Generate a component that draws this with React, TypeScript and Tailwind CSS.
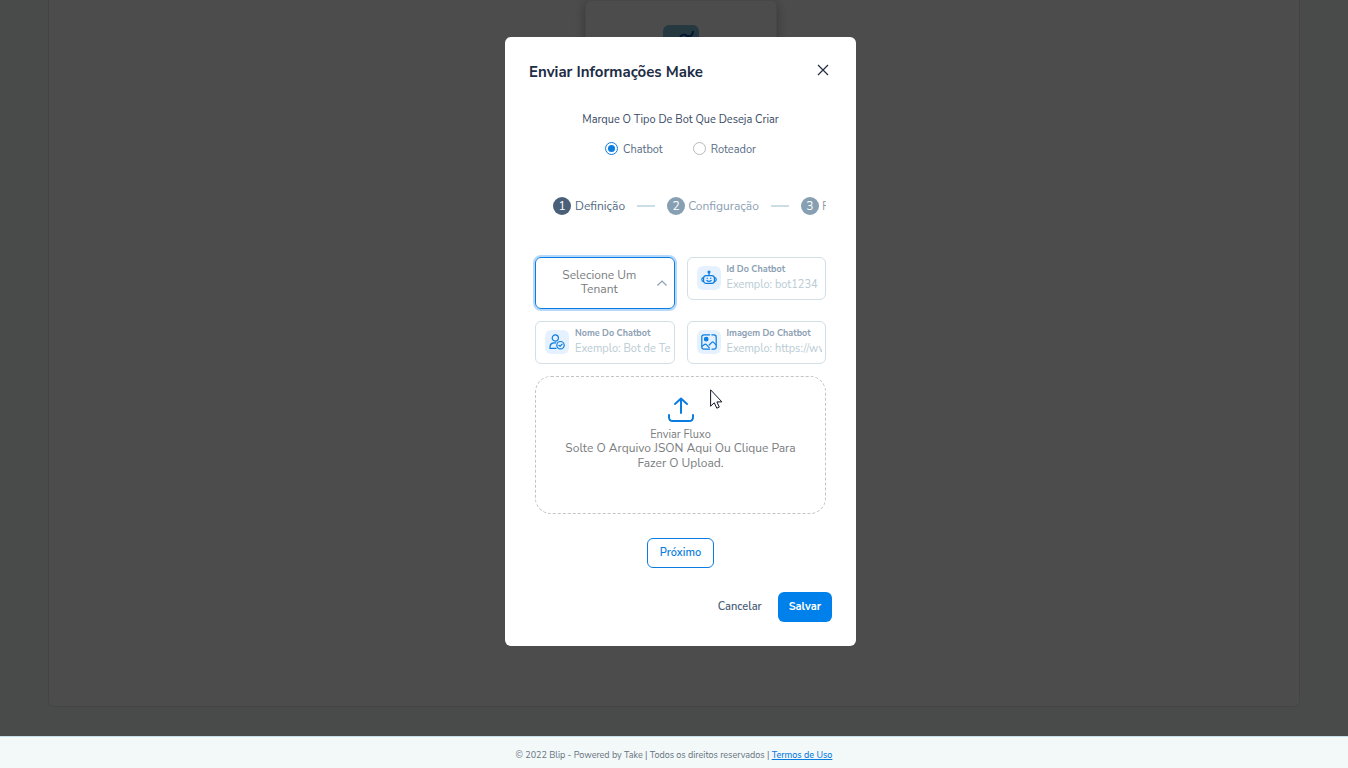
import React, { useState } from "react";

interface FieldProps {
  id: string;
  label: string;
  placeholder: string;
  icon: React.ReactNode;
}

const RobotIcon = () => (
  <svg width="16" height="16" viewBox="0 0 16 16" fill="none" stroke="#0b7de0" strokeWidth="1.2" strokeLinecap="round">
    <circle cx="8" cy="2" r="1.5" fill="#0b7de0" stroke="none" />
    <path d="M8 3v2.4" />
    <rect x="2.6" y="5.6" width="10.8" height="7.8" rx="2.6" />
    <path d="M2.3 7.6C.3 7.8.3 11.4 2.3 11.6M13.7 7.6c2 .2 2 3.8 0 4" />
    <path d="M6.2 8v.6M9.8 8v.6M5.8 10.6c1.2.9 3.2.9 4.4 0" />
  </svg>
);

const UserCheckIcon = () => (
  <svg width="16" height="16" viewBox="0 0 16 16" fill="none" stroke="#0b7de0" strokeWidth="1.2" strokeLinecap="round" strokeLinejoin="round">
    <circle cx="6.3" cy="4" r="3.1" />
    <path d="M7 14.4H1V13c0-2.4 1.8-4.2 4.2-4.2h1.6" />
    <circle cx="11.5" cy="11.2" r="3.7" />
    <path d="M9.9 11.3l1.2 1.1 2-2.2" />
  </svg>
);

const ImageIcon = () => (
  <svg width="16" height="16" viewBox="0 0 16 16" fill="none" stroke="#0b7de0" strokeWidth="1.2" strokeLinecap="round" strokeLinejoin="round">
    <path d="M8.6.8H3A2.2 2.2 0 0 0 .8 3v10A2.2 2.2 0 0 0 3 15.2h5.6M10.8.8H13A2.2 2.2 0 0 1 15.2 3v10a2.2 2.2 0 0 1-2.2 2.2h-2" />
    <circle cx="5.2" cy="5.2" r="1.8" fill="#0b7de0" />
    <path d="M1 12.4l2.4-1.9c.7-.5 1.4-.4 2 .2l2.8 3M8.2 11l2.6-2.7c.6-.6 1.2-.6 1.8 0L15 10.8" />
  </svg>
);

const UploadIcon = () => (
  <svg width="26" height="26" viewBox="0 0 26 26" fill="none" stroke="#0b7de0" strokeWidth="2" strokeLinecap="round" strokeLinejoin="round">
    <path d="M13 16V1.5M7 7l6-5.5L19 7" />
    <path d="M1 18v2.2c0 2.4 1.4 3.8 3.8 3.8h16.4c2.4 0 3.8-1.4 3.8-3.8V18" />
  </svg>
);

const Field: React.FC<FieldProps> = ({ id, label, placeholder, icon }) => (
  <div className="flex h-[43px] min-w-0 items-center gap-1.5 self-start rounded-md border border-[#d2dfe6] pb-0.5 pl-[9px] pr-[3px]">
    <span className="flex size-6 shrink-0 items-center justify-center rounded-md bg-[#e5f1fe]">
      {icon}
    </span>
    <div className="min-w-0 flex-1">
      <label htmlFor={id} className="mb-px block whitespace-nowrap text-[9px] font-bold leading-[14px] text-[#8ca0b3]">
        {label}
      </label>
      <input
        id={id}
        type="text"
        placeholder={placeholder}
        className="block h-4 w-full text-[11px] leading-4 text-[#3a4a65] outline-none placeholder:text-[#b9cbd3]"
      />
    </div>
  </div>
);

const steps = ["Definição", "Configuração", "Fim"];

const App: React.FC = () => {
  const [botType, setBotType] = useState<string>("Chatbot");
  const [tenant, setTenant] = useState<string>("");

  return (
    <div className="relative flex min-h-screen flex-col bg-[#f5fafa] font-['Nunito_Sans','Nunito','Open_Sans',sans-serif]">
      {/* Page behind the modal */}
      <main className="flex flex-1 flex-col">
        <section className="mx-12 mb-[29px] flex flex-1 justify-center rounded-b-md border border-t-0 border-[#e0e6e7] bg-white pl-3.5">
          <div className="flex h-40 w-48 justify-center self-start rounded-md border border-[#efefef] pt-6 shadow-[0_2px_12px_rgba(0,0,0,0.3)] bg-white">
            <span className="size-9 rounded-md bg-[#80bcd6]">
              <svg width="36" height="36" viewBox="0 0 36 36" fill="none" stroke="#0a4fa0" strokeWidth="2">
                <path d="M17 12c2-3 5-3 7-1M23 11c5 1 7-1 7-5" />
              </svg>
            </span>
          </div>
        </section>
      </main>
      <footer className="relative z-20 h-8 border-t border-[#c7dfe8] bg-[#f3f8f9] pt-[11px] text-center text-[9px] leading-[14px] text-[#66747d]">
        © 2022 Blip - Powered by Take | Todos os direitos reservados |{" "}
        <a href="#termos" className="font-medium text-[#0b7de0] underline">
          Termos de Uso
        </a>
      </footer>

      {/* Overlay */}
      <div className="absolute inset-0 z-10 flex items-start justify-center bg-black/70 pl-[13px] pt-[37px]">
        <div role="dialog" aria-labelledby="modal-title" className="w-full max-w-[351px] rounded-md bg-white p-6">
          <header className="flex h-[22px] items-start justify-between">
            <h2 id="modal-title" className="text-[15px] font-bold leading-[22px] text-[#202c44]">
              Enviar Informações Make
            </h2>
            <button type="button" aria-label="Fechar" className="flex size-[18px] items-center justify-center">
              <svg width="12" height="12" viewBox="0 0 12 12" stroke="#202c44" strokeWidth="1.2">
                <path d="M1 1l10 10M11 1L1 11" />
              </svg>
            </button>
          </header>

          <form className="px-1.5 pt-[29px]" onSubmit={(e) => e.preventDefault()}>
            <fieldset className="text-center">
              <legend className="w-full text-[11px] leading-4 text-[#3a4a65]">
                Marque O Tipo De Bot Que Deseja Criar
              </legend>
              <div className="flex justify-center gap-[30px] pt-3.5">
                {["Chatbot", "Roteador"].map((type) => (
                  <label key={type} className="flex items-start gap-[5px] text-[11px] leading-4 text-[#5a6d85]">
                    <input
                      type="radio"
                      name="botType"
                      checked={botType === type}
                      onChange={() => setBotType(type)}
                      className="size-[13px] appearance-none rounded-full border border-[#b9b9b9] bg-clip-content p-[3px] checked:border-[#0b7de0] checked:bg-[#0b7de0] checked:p-0.5"
                    />
                    {type}
                  </label>
                ))}
              </div>
            </fieldset>

            <ol className="mt-[21px] flex h-[54px] items-center overflow-hidden rounded-md pl-[18px] text-xs">
              {steps.map((step, i) => (
                <li key={step} className="flex shrink-0 items-center">
                  {i > 0 && <span className="mx-3 h-0.5 w-[18px] bg-[#cbdde5]" />}
                  <span
                    className={`flex size-[18px] items-center justify-center rounded-full text-white ${
                      i === 0 ? "bg-[#4a6078]" : "bg-[#869fb2]"
                    }`}
                  >
                    {i + 1}
                  </span>
                  <span className={`${i === 0 ? "pl-1 text-[#536a84]" : "pl-[3px] text-[#8ca0b3]"}`}>{step}</span>
                </li>
              ))}
            </ol>

            <div className="grid grid-cols-2 gap-3 pt-6">
              <div className="relative flex h-[52px] items-center rounded-md border border-[#0b7de0] pl-[22px] pr-[7px] ring-2 ring-[#b6d8fb]">
                <span aria-hidden="true" className="flex-1 pb-0.5 text-center text-xs leading-[14px] text-[#7a7d80]">
                  {tenant || "Selecione Um Tenant"}
                </span>
                <svg className="ml-4" width="10" height="6" viewBox="0 0 10 6" fill="none" stroke="#8ca0b3" strokeWidth="1.2">
                  <path d="M.5 5.5L5 1l4.5 4.5" />
                </svg>
                <select
                  aria-label="Selecione Um Tenant"
                  value={tenant}
                  onChange={(e) => setTenant(e.target.value)}
                  className="absolute inset-0 size-full cursor-pointer opacity-0"
                >
                  <option value="">Selecione Um Tenant</option>
                </select>
              </div>
              <Field id="botId" label="Id Do Chatbot" placeholder="Exemplo: bot1234" icon={<RobotIcon />} />
              <Field id="botName" label="Nome Do Chatbot" placeholder="Exemplo: Bot de Teste" icon={<UserCheckIcon />} />
              <Field id="botImage" label="Imagem Do Chatbot" placeholder="Exemplo: https://www.imagem.com" icon={<ImageIcon />} />
            </div>

            <button
              type="button"
              className="relative mt-3 flex h-[138px] w-full flex-col items-center rounded-2xl border border-dashed border-[#c4c4c4] px-6 pt-5 text-[#7a7d80]"
            >
              <UploadIcon />
              <span className="pt-[5px] text-[11px] leading-[13px]">Enviar Fluxo</span>
              <span className="text-xs leading-[15px]">
                Solte O Arquivo JSON Aqui Ou Clique Para Fazer O Upload.
              </span>
              {/* Mouse pointer */}
              <svg className="absolute left-[174px] top-3" width="13" height="20" viewBox="0 0 13 20" fill="#fff" stroke="#111827">
                <path d="M.6.8v16.4l3.7-3.4 2.5 5.4 2.5-1.1-2.4-5.2h5z" />
              </svg>
            </button>

            <div className="flex justify-center pt-6">
              <button type="button" className="h-[30px] rounded-md border border-[#0b7de0] px-3 text-[11px] font-semibold text-[#0b7de0]">
                Próximo
              </button>
            </div>
          </form>

          <div className="flex justify-end gap-4 pt-6">
            <button type="button" className="text-[11px] font-semibold text-[#4a6078]">
              Cancelar
            </button>
            <button type="button" className="h-[30px] rounded-md bg-[#0080ea] px-[11px] text-[11px] font-bold text-white">
              Salvar
            </button>
          </div>
        </div>
      </div>
    </div>
  );
};

export default App;
